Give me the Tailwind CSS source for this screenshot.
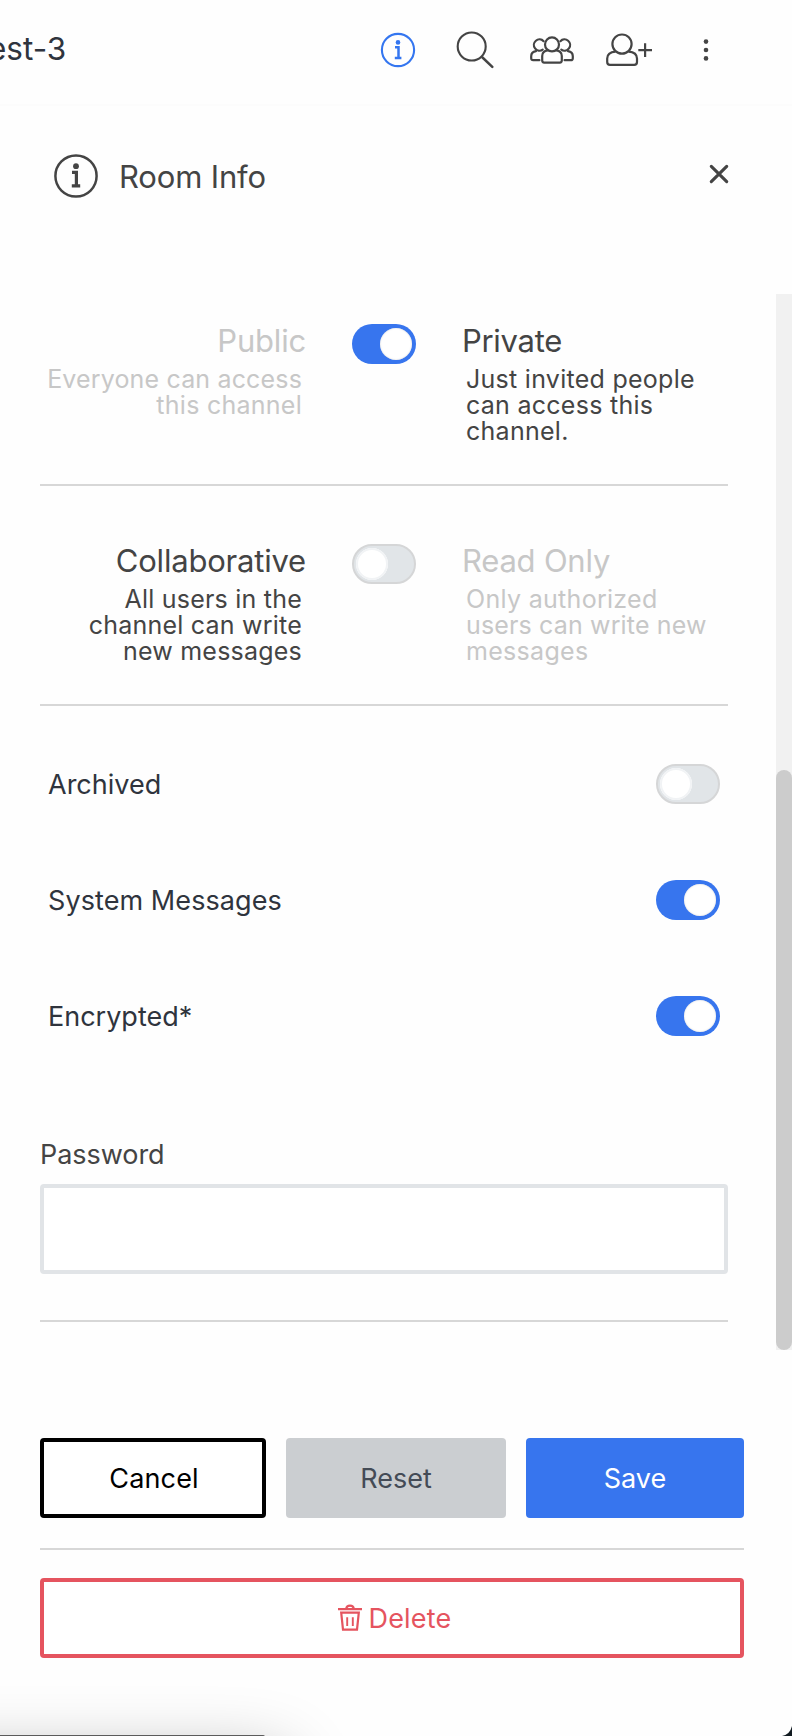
<!DOCTYPE html>
<html lang="en">
<head>
<meta charset="utf-8">
<title>Room Info</title>
<script src="https://cdn.jsdelivr.net/npm/@tailwindcss/browser@4"></script>
</head>
<body class="bg-[#fefefe]">
<div class="relative flex h-[1736px] w-[792px] flex-col overflow-hidden bg-[#fefefe] font-[Inter,sans-serif] text-[#444444]">

  <header class="flex h-[106px] shrink-0 items-center border-b-2 border-[#fcfcfc] pr-[82px] pb-1">
    <h1 class="-mt-[2px] -ml-[12px] text-[31.5px] leading-10 text-[#2f343d]">est-3</h1>
    <nav class="ml-auto flex items-center">
      <svg class="h-10 w-9 text-[#3476f0]" viewBox="0 0 36 40" fill="none" stroke="currentColor">
        <circle cx="18" cy="20" r="16.1" stroke-width="2.1"/>
        <circle cx="18" cy="12.4" r="2.3" fill="currentColor" stroke="none"/>
        <path d="M15 17.3h3.5v10.5M14.8 28h6.6" stroke-width="2.5"/>
      </svg>
      <svg class="ml-10 h-10 w-[38px]" viewBox="0 0 38 40" fill="none" stroke="currentColor" stroke-linecap="round">
        <circle cx="15.7" cy="16.5" r="14" stroke-width="2.1"/>
        <path d="M26.5 27.5L36.3 36.8" stroke-width="2.5"/>
      </svg>
      <svg class="ml-[35px] h-10 w-[46px]" viewBox="0 0 46 40" fill="none" stroke="currentColor" stroke-width="2.2" stroke-linecap="round" stroke-linejoin="round">
        <path d="M14.6 11.2A5.6 5.6 0 1 0 13.7 19.6"/>
        <path d="M31.4 11.2A5.6 5.6 0 1 1 32.3 19.6"/>
        <path d="M10.4 30.2H4.2Q2.2 30.2 2.2 28.2V26.2Q2.2 22 7 21.2"/>
        <path d="M35.6 30.2h6.2Q43.8 30.2 43.8 28.2V26.2Q43.8 22 39 21.2"/>
        <circle cx="23" cy="14.4" r="7"/>
        <path d="M18.6 20.3C15 20.8 13.2 23 13.2 26V30.6Q13.2 32.6 15.2 32.6H30.8Q32.8 32.6 32.8 30.6V26C32.8 23 31 20.8 27.4 20.3"/>
      </svg>
      <svg class="ml-[30px] h-10 w-12" viewBox="0 0 48 40" fill="none" stroke="currentColor" stroke-width="2.2" stroke-linejoin="round">
        <circle cx="17" cy="14.1" r="9.6"/>
        <path d="M10.5 21.6C5.2 22 2.2 24.8 2.2 28.6V32Q2.2 34.8 5 34.8H29.2Q32 34.8 32 32V28.6C32 24.8 29 22 23.5 21.6"/>
        <path d="M33.3 20.2H47M40.1 13.3V27"/>
      </svg>
      <svg class="ml-[49px] h-10 w-2" viewBox="0 0 8 40" fill="currentColor">
        <circle cx="4" cy="11.6" r="2.3"/><circle cx="4" cy="20" r="2.3"/><circle cx="4" cy="28.4" r="2.3"/>
      </svg>
    </nav>
  </header>

  <div class="flex h-[188px] shrink-0 items-center pr-[63px] pb-[48px] pl-[53px]">
    <svg class="h-[46px] w-[46px]" viewBox="0 0 46 46" fill="none" stroke="currentColor">
      <circle cx="23" cy="23" r="20.6" stroke-width="2.5"/>
      <circle cx="23" cy="13.2" r="2.9" fill="currentColor" stroke="none"/>
      <path d="M19 19.4h4.4v13.4M18.8 32.8h8.4" stroke-width="3.2"/>
    </svg>
    <h2 class="mt-[2px] ml-[20px] text-[31px] leading-10 tracking-[-0.16px]">Room Info</h2>
    <svg class="-mt-1 ml-auto h-5 w-5" viewBox="0 0 20 20" fill="none" stroke="currentColor" stroke-width="3.1" stroke-linecap="round">
      <path d="M2.3 2.3L17.7 17.7M17.7 2.3L2.3 17.7"/>
    </svg>
  </div>

  <main class="flex h-[1056px] shrink-0 justify-between">
    <div class="ml-10 w-[688px]">
      <section class="flex h-[192px] border-b-2 border-[#d7d7d7] pt-[27px]">
        <div class="w-[266px] text-right text-[#c7c7c7]">
          <h3 class="text-[31px] leading-10 tracking-[-0.2px]">Public</h3>
          <p class="mt-[5px] pr-[4px] text-[25px] leading-[26px] tracking-[0.16px]">Everyone can access<br><span class="tracking-[0.26px]">this channel</span></p>
        </div>
        <div class="mt-[3px] ml-[46px] flex h-10 w-16 justify-end rounded-full bg-[#3775ee] p-1"><span class="h-8 w-8 rounded-full bg-white shadow-[inset_0_0_2px_#d5d5d5]"></span></div>
        <div class="ml-[46px] flex-1 whitespace-nowrap">
          <h3 class="text-[31px] leading-10 tracking-[-0.3px]">Private</h3>
          <p class="mt-[5px] pl-[4px] text-[25px] leading-[26px] tracking-[0.27px]">Just invited people<br>can access this<br>channel.</p>
        </div>
      </section>

      <section class="flex h-[220px] border-b-2 border-[#d7d7d7] pt-[55px]">
        <div class="w-[266px] text-right">
          <h3 class="text-[31px] leading-10 tracking-[-0.2px]">Collaborative</h3>
          <p class="mt-[5px] pr-[4px] text-[25px] leading-[26px] tracking-[0.22px]">All users in the<br>channel can write<br>new messages</p>
        </div>
        <div class="mt-[3px] ml-[46px] flex h-10 w-16 rounded-full border-2 border-[#d5d6d7] bg-[#e1e5e8] p-0.5"><span class="h-8 w-8 rounded-full bg-white shadow-[inset_0_0_0_2px_#f1f3f5]"></span></div>
        <div class="ml-[46px] flex-1 whitespace-nowrap text-[#c7c7c7]">
          <h3 class="text-[31px] leading-10 tracking-[-0.22px]">Read Only</h3>
          <p class="mt-[5px] pl-[4px] text-[25px] leading-[26px] tracking-[0.3px]">Only authorized<br><span class="tracking-[0.15px]">users can write new</span><br>messages</p>
        </div>
      </section>

      <div class="flex flex-col gap-[76px] px-2 pt-[58px] text-[27px] leading-10 text-[#2f343d]">
        <div class="flex h-10 items-center justify-between">
          <span class="mt-[2px]">Archived</span>
          <div class="flex h-10 w-16 rounded-full border-2 border-[#d5d6d7] bg-[#e1e5e8] p-0.5"><span class="h-8 w-8 rounded-full bg-white shadow-[inset_0_0_0_2px_#f1f3f5]"></span></div>
        </div>
        <div class="flex h-10 items-center justify-between">
          <span class="mt-[2px] tracking-[0.08px]">System Messages</span>
          <div class="flex h-10 w-16 justify-end rounded-full bg-[#3775ee] p-1"><span class="h-8 w-8 rounded-full bg-white shadow-[inset_0_0_2px_#d5d5d5]"></span></div>
        </div>
        <div class="flex h-10 items-center justify-between">
          <span class="mt-[2px]">Encrypted*</span>
          <div class="flex h-10 w-16 justify-end rounded-full bg-[#3775ee] p-1"><span class="h-8 w-8 rounded-full bg-white shadow-[inset_0_0_2px_#d5d5d5]"></span></div>
        </div>
      </div>

      <label class="mt-[99px] block border-b-2 border-[#d7d7d7] pb-[46px] text-[27px] leading-10">
        <span class="block tracking-[-0.05px]">Password</span>
        <input type="password" class="mt-[9px] block h-[90px] w-full rounded-[4px] border-4 border-[#e1e4e7] bg-white">
      </label>
    </div>
    <div class="w-4 bg-[#f1f1f1] pt-[476px]"><div class="h-[580px] rounded-full bg-[#cccccc]"></div></div>
  </main>

  <footer class="ml-10 w-[704px] pt-[88px] text-[27px] leading-10">
    <div class="flex gap-5 border-b-2 border-[#d7d7d7] pb-[30px]">
      <button class="h-20 w-[226px] rounded-[4px] border-4 border-black bg-white pt-[2px] pl-[2px] tracking-[0.15px] text-black">Cancel</button>
      <button class="h-20 w-[220px] rounded-[4px] bg-[#cbced1] pt-[2px] text-[#444b56]">Reset</button>
      <button class="h-20 w-[218px] rounded-[4px] bg-[#3775ee] pt-[2px] text-white">Save</button>
    </div>
    <button class="mt-7 flex h-20 w-full items-center justify-center rounded-[4px] border-4 border-[#e5545f] bg-white pl-[6px] text-[#e5545f]">
      <svg class="mr-[6px] h-7 w-6" viewBox="0 0 24 28" fill="none" stroke="currentColor" stroke-width="2.2">
        <path d="M0 5.1H24M8.2 4.6C8.5 2.6 10 1.6 12 1.6s3.5 1 3.8 3"/>
        <path d="M3.2 8.6H20.8L19 25.6H5Z"/>
        <path d="M9.2 13.3V22M14.8 13.3V22" stroke-width="1.9"/>
      </svg>
      <span class="mt-[2px] tracking-[0.2px]">Delete</span>
    </button>
  </footer>

  <div class="absolute top-[1735px] -left-[200px] h-[400px] w-[465px] rounded-t-[2px] bg-[#5c5c5c] shadow-[0_45px_70px_20px_rgba(0,0,0,0.33)]"></div>
  <svg class="absolute right-0 bottom-0 h-[10px] w-[10px]" viewBox="0 0 10 10"><path d="M0 10Q8 8.5 10 0V10Z" fill="#111a20"/></svg>
</div>
</body>
</html>
